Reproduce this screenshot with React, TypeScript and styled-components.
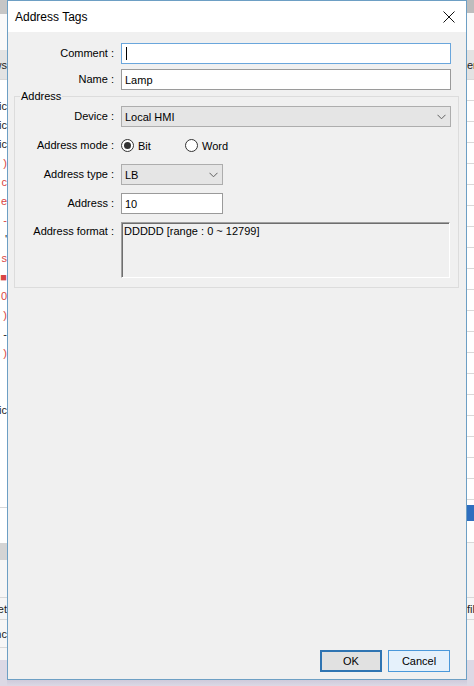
import React from "react";
import styled, { createGlobalStyle } from "styled-components";

const GlobalStyle = createGlobalStyle`
  html, body {
    margin: 0;
    padding: 0;
  }
  body {
    width: 474px;
    height: 686px;
    overflow: hidden;
    background: #dcd9e5;
    font-family: "Liberation Sans", Arial, sans-serif;
    color: #000;
  }
`;

const StyledScreen = styled.div`
  display: flex;
  width: 474px;
  height: 686px;
`;

const StyledStrip = styled.div`
  width: 7px;
  flex: none;
  display: flex;
  flex-direction: column;
  overflow: hidden;
  background: #dcd9e5;
`;

const StyledStripRow = styled.div<{
  $h?: number;
  $bg?: string;
  $color?: string;
  $line?: boolean;
  $end?: boolean;
}>`
  height: ${(p) => (p.$h ? `${p.$h}px` : "auto")};
  flex: ${(p) => (p.$h ? "none" : "1")};
  display: flex;
  align-items: center;
  justify-content: ${(p) => (p.$end ? "flex-end" : "flex-start")};
  background: ${(p) => p.$bg || "#fbfbfb"};
  color: ${(p) => p.$color || "#222"};
  border-bottom: ${(p) => (p.$line ? "1px solid #d8d8d8" : "none")};
  box-sizing: border-box;
  font-size: 11px;
  white-space: nowrap;
  overflow: hidden;
`;

const StyledCenter = styled.div`
  width: 460px;
  flex: none;
  display: flex;
  flex-direction: column;
`;

const StyledDialog = styled.div`
  width: 460px;
  height: 680px;
  box-sizing: border-box;
  border: 1px solid #6d9fc4;
  background: #f0f0f0;
  display: flex;
  flex-direction: column;
`;

const StyledShade = styled.div`
  flex: 1;
  background: linear-gradient(#cfcbdb, #dcd9e5);
`;

const StyledTitleBar = styled.div`
  height: 31px;
  flex: none;
  background: #fff;
  display: flex;
  align-items: center;
  justify-content: space-between;
  padding-left: 7px;
`;

const StyledTitle = styled.div`
  font-size: 12px;
  padding-top: 1px;
`;

const StyledClose = styled.div`
  width: 32px;
  height: 31px;
  margin-right: 1px;
  display: flex;
  align-items: center;
  justify-content: center;
`;

const StyledBody = styled.div`
  flex: 1;
  display: flex;
  flex-direction: column;
  padding: 11px 0 7px;
`;

const StyledGrid = styled.div<{ $label: number; $gap: number; $right: number }>`
  display: grid;
  grid-template-columns: ${(p) => p.$label}px 1fr;
  column-gap: 5px;
  row-gap: ${(p) => p.$gap}px;
  padding-right: ${(p) => p.$right}px;
  align-items: start;
`;

const StyledLabel = styled.div<{ $top?: boolean }>`
  font-size: 11px;
  line-height: ${(p) => (p.$top ? "16px" : "21px")};
  padding-top: ${(p) => (p.$top ? "1px" : "0")};
  padding-right: 2px;
  text-align: right;
  white-space: nowrap;
`;

const StyledField = styled.div<{ $focused?: boolean; $width?: number }>`
  height: 21px;
  width: ${(p) => (p.$width ? `${p.$width}px` : "auto")};
  box-sizing: border-box;
  border: 1px solid ${(p) => (p.$focused ? "#6aa6dc" : "#9a9a9a")};
  background: #fff;
  display: flex;
  align-items: center;
  padding: 0 3px;
  font-size: 11px;
`;

const StyledCaret = styled.span`
  width: 1px;
  height: 13px;
  background: #000;
  margin-left: 1px;
`;

const StyledSelect = styled.div<{ $width?: number }>`
  height: 21px;
  width: ${(p) => (p.$width ? `${p.$width}px` : "auto")};
  box-sizing: border-box;
  border: 1px solid #adadad;
  background: #e5e5e5;
  display: flex;
  align-items: center;
  justify-content: space-between;
  padding: 0 4px 0 3px;
  font-size: 11px;
`;

const StyledGroup = styled.fieldset`
  margin: 0 7px 0 6px;
  padding: 4px 0 9px;
  border: 1px solid #dcdcdc;
  min-inline-size: 0;
`;

const StyledLegend = styled.legend`
  font-size: 11px;
  line-height: 12px;
  padding: 0 1px;
  margin-left: 5px;
`;

const StyledRadioGroup = styled.div`
  height: 21px;
  display: flex;
  align-items: center;
`;

const StyledRadio = styled.div`
  min-width: 64px;
  display: flex;
  align-items: center;
  gap: 4px;
  font-size: 11px;
`;

const StyledRadioCircle = styled.span<{ $checked?: boolean }>`
  width: 13px;
  height: 13px;
  box-sizing: border-box;
  border-radius: 50%;
  border: 1px solid #333;
  background: #fff;
  display: flex;
  align-items: center;
  justify-content: center;

  &::after {
    content: "";
    width: 7px;
    height: 7px;
    border-radius: 50%;
    background: ${(p) => (p.$checked ? "#333" : "transparent")};
  }
`;

const StyledFormat = styled.div`
  height: 56px;
  margin-right: 1px;
  box-sizing: border-box;
  border-top: 1px solid #a0a0a0;
  border-left: 1px solid #a0a0a0;
  border-right: 1px solid #fff;
  border-bottom: 1px solid #fff;
  box-shadow: inset 1px 1px 0 #6e6e6e;
  padding: 2px 2px 0;
  font-size: 11px;
  line-height: 13px;
`;

const StyledButtons = styled.div`
  margin-top: auto;
  display: flex;
  justify-content: flex-end;
  gap: 6px;
  padding-right: 16px;
`;

const StyledButton = styled.div<{ $default?: boolean }>`
  width: 62px;
  height: 22px;
  box-sizing: border-box;
  display: flex;
  align-items: center;
  justify-content: center;
  font-size: 11px;
  background: ${(p) => (p.$default ? "#e1e1e1" : "#e5f1fb")};
  border: ${(p) => (p.$default ? "2px solid #2f74b2" : "1px solid #4a98da")};
`;

const Chevron = () => (
  <svg width="9" height="6" viewBox="0 0 9 6">
    <polyline points="0.5,0.8 4.5,4.8 8.5,0.8" fill="none" stroke="#606060" strokeWidth="1" />
  </svg>
);

const CloseIcon = () => (
  <svg width="12" height="12" viewBox="0 0 12 12">
    <path d="M0.5 0.5 L11.5 11.5 M11.5 0.5 L0.5 11.5" stroke="#111" strokeWidth="1" />
  </svg>
);

type StripItem = { h?: number; bg?: string; text?: string; color?: string; line?: boolean };

const RED = "#d84545";

const leftRows: StripItem[] = [
  { h: 14, bg: "#c6c6c6" },
  { h: 36, bg: "#f9f9f9" },
  { h: 30, bg: "#e3e3e3", text: "Views", line: true },
  { h: 16, bg: "#fff" },
  { h: 19, bg: "#fff", text: "Logic" },
  { h: 19, bg: "#fff", text: "Logic" },
  { h: 19, bg: "#fff", text: "Logic" },
  { h: 19, bg: "#fff", text: ")", color: RED },
  { h: 19, bg: "#fff", text: "c", color: RED },
  { h: 19, bg: "#fff", text: "e", color: RED },
  { h: 19, bg: "#fff", text: "-", color: RED },
  { h: 19, bg: "#fff", text: "'" },
  { h: 19, bg: "#fff", text: "s", color: RED },
  { h: 19, bg: "#fff", text: "■", color: RED },
  { h: 19, bg: "#fff", text: "0", color: RED },
  { h: 19, bg: "#fff", text: ")", color: RED },
  { h: 19, bg: "#fff", text: "-" },
  { h: 19, bg: "#fff", text: ")", color: RED },
  { h: 19, bg: "#fff" },
  { h: 19, bg: "#fff" },
  { h: 19, bg: "#fff", text: "Logic" },
  { h: 89, bg: "#fff", line: true },
  { h: 35, bg: "#fff" },
  { h: 17, bg: "#d4d4d4" },
  { h: 38, bg: "#f6f6f6", line: true },
  { h: 22, bg: "#f6f6f6", text: "Set", line: true },
  { h: 28, bg: "#f6f6f6", text: "Sync", line: true },
  { h: 12, bg: "#f6f6f6" },
  { bg: "#dcd9e5" },
];

const rightRows: StripItem[] = [
  { h: 13, bg: "#bdbdbd" },
  { h: 37, bg: "#fafafa" },
  { h: 30, bg: "#e3e3e3", text: "enable", line: true },
  ...Array.from({ length: 20 }, () => ({ h: 21, bg: "#fff", line: true })),
  { h: 5, bg: "#fff" },
  { h: 16, bg: "#2f6fbf" },
  { h: 22, bg: "#fff", line: true },
  { h: 55, bg: "#f6f6f6", line: true },
  { h: 22, bg: "#f6f6f6", text: "fill", line: true },
  { h: 40, bg: "#f6f6f6" },
  { bg: "#dcd9e5" },
];

const Strip = ({ rows, end }: { rows: StripItem[]; end?: boolean }) => (
  <StyledStrip>
    {rows.map((r, i) => (
      <StyledStripRow key={i} $h={r.h} $bg={r.bg} $color={r.color} $line={r.line} $end={end}>
        {r.text && <span>{r.text}</span>}
      </StyledStripRow>
    ))}
  </StyledStrip>
);

const App = () => {
  return (
    <>
      <GlobalStyle />
      <StyledScreen>
        <Strip rows={leftRows} end />
        <StyledCenter>
          <StyledDialog>
            <StyledTitleBar>
              <StyledTitle>Address Tags</StyledTitle>
              <StyledClose>
                <CloseIcon />
              </StyledClose>
            </StyledTitleBar>
            <StyledBody>
              <StyledGrid $label={108} $gap={5} $right={15}>
                <StyledLabel>Comment :</StyledLabel>
                <StyledField $focused>
                  <StyledCaret />
                </StyledField>
                <StyledLabel>Name :</StyledLabel>
                <StyledField>Lamp</StyledField>
              </StyledGrid>

              <StyledGroup>
                <StyledLegend>Address</StyledLegend>
                <StyledGrid $label={101} $gap={8} $right={7}>
                  <StyledLabel>Device :</StyledLabel>
                  <StyledSelect>
                    <span>Local HMI</span>
                    <Chevron />
                  </StyledSelect>

                  <StyledLabel>Address mode :</StyledLabel>
                  <StyledRadioGroup>
                    <StyledRadio>
                      <StyledRadioCircle $checked />
                      Bit
                    </StyledRadio>
                    <StyledRadio>
                      <StyledRadioCircle />
                      Word
                    </StyledRadio>
                  </StyledRadioGroup>

                  <StyledLabel>Address type :</StyledLabel>
                  <StyledSelect $width={102}>
                    <span>LB</span>
                    <Chevron />
                  </StyledSelect>

                  <StyledLabel>Address :</StyledLabel>
                  <StyledField $width={102}>10</StyledField>

                  <StyledLabel $top>Address format :</StyledLabel>
                  <StyledFormat>DDDDD [range : 0 ~ 12799]</StyledFormat>
                </StyledGrid>
              </StyledGroup>

              <StyledButtons>
                <StyledButton $default>OK</StyledButton>
                <StyledButton>Cancel</StyledButton>
              </StyledButtons>
            </StyledBody>
          </StyledDialog>
          <StyledShade />
        </StyledCenter>
        <Strip rows={rightRows} />
      </StyledScreen>
    </>
  );
};

export default App;
